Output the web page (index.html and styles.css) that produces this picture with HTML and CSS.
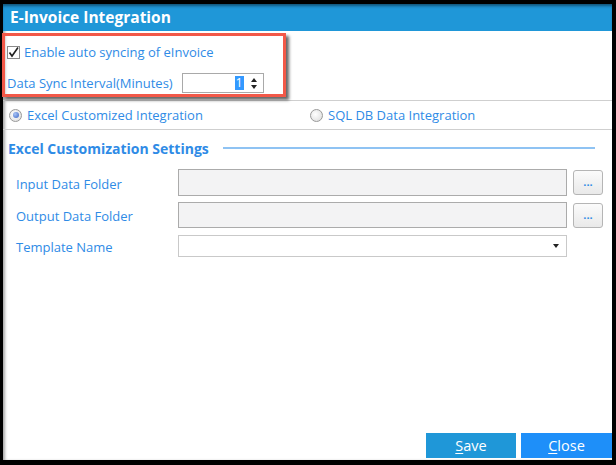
FILE: index.html
```html
<!DOCTYPE html>
<html>
<head>
<meta charset="utf-8">
<link rel="stylesheet" href="styles.css">
</head>
<body>
<div class="window">
  <div class="titlebar">E-Invoice Integration</div>
  <div class="sync">
    <div class="row check-row">
      <svg class="checkbox" width="13" height="13" viewBox="0 0 13 13"><rect x="0.5" y="0.5" width="12" height="12" fill="#fff" stroke="#8a8a8a"/><path d="M2.5 6.5 L5 10 L11 1.5" fill="none" stroke="#222" stroke-width="1.6"/></svg>
      <span class="lbl">Enable auto syncing of eInvoice</span>
    </div>
    <div class="row interval-row">
      <span class="lbl">Data Sync Interval(Minutes)</span>
      <div class="spinner">
        <span class="val">1</span>
        <span class="arrows"><span class="up"></span><span class="down"></span></span>
      </div>
    </div>
  </div>
  <div class="radios">
    <div class="radio-item first">
      <span class="radio on"></span><span class="lbl">Excel Customized Integration</span>
    </div>
    <div class="radio-item">
      <span class="radio"></span><span class="lbl">SQL DB Data Integration</span>
    </div>
  </div>
  <div class="section-head">
    <span class="head-text">Excel Customization Settings</span>
    <span class="head-line"></span>
  </div>
  <div class="form">
    <div class="frow r1">
      <span class="lbl">Input Data Folder</span>
      <div class="box"></div>
      <div class="browse">...</div>
    </div>
    <div class="frow r2">
      <span class="lbl">Output Data Folder</span>
      <div class="box"></div>
      <div class="browse">...</div>
    </div>
    <div class="frow r3">
      <span class="lbl">Template Name</span>
      <div class="select"><span class="caret"></span></div>
    </div>
  </div>
  <div class="footer">
    <div class="btn save"><u>S</u>ave</div>
    <div class="btn close"><u>C</u>lose</div>
  </div>
  <div class="highlight"></div>
</div>
</body>
</html>
```
FILE: styles.css
```css
html, body {
  margin: 0;
  padding: 0;
}
body {
  width: 616px;
  height: 465px;
  background: #000;
  overflow: hidden;
  font-family: "Open Sans", "Noto Sans", sans-serif;
}
.window {
  position: relative;
  margin: 4px 4px 0 3px;
  width: 609px;
  height: 456px;
  background: #fff;
  display: flex;
  flex-direction: column;
  box-shadow: inset 3px 0 3px -1px rgba(0,0,0,0.35);
}
.titlebar {
  height: 27px;
  background: #1f97d8;
  color: #fff;
  font-weight: bold;
  font-size: 15.5px;
  line-height: 27px;
  padding-left: 7px;
  box-shadow: inset 0 3px 3px -1px rgba(0,0,0,0.45);
}
.lbl {
  color: #2f8be6;
  font-size: 13px;
  white-space: nowrap;
}
.sync {
  height: 69px;
  border-bottom: 1px solid #cfcfcf;
}
.row {
  display: flex;
  align-items: center;
  height: 22px;
}
.check-row {
  margin-top: 10px;
  padding-left: 4px;
  gap: 4px;
}
.checkbox {
  display: block;
}
.interval-row {
  margin-top: 9px;
  padding-left: 4px;
}
.spinner {
  margin-left: 9px;
  width: 80px;
  height: 18px;
  border: 1px solid #a9a9a9;
  display: flex;
  align-items: center;
  justify-content: flex-end;
  font-size: 12.5px;
}
.val {
  background: #3399ff;
  color: #fff;
  line-height: 14px;
  padding: 0 1px;
  margin-right: 4px;
}
.arrows {
  width: 12px;
  display: flex;
  flex-direction: column;
  align-items: center;
  gap: 3px;
  margin-right: 3px;
}
.up {
  width: 0; height: 0;
  border-left: 3px solid transparent;
  border-right: 3px solid transparent;
  border-bottom: 4px solid #222;
}
.down {
  width: 0; height: 0;
  border-left: 3px solid transparent;
  border-right: 3px solid transparent;
  border-top: 4px solid #222;
}
.radios {
  height: 28px;
  border-bottom: 1px solid #cfcfcf;
  display: flex;
  align-items: center;
}
.radio-item {
  display: flex;
  align-items: center;
  gap: 5px;
}
.radio-item.first {
  padding-left: 6px;
  width: 301px;
}
.radio {
  width: 11px;
  height: 11px;
  border-radius: 50%;
  border: 1px solid #9a9a9a;
  background: radial-gradient(circle at 40% 40%, #ffffff, #d9d9d9);
  box-sizing: content-box;
  position: relative;
}
.radio.on::after {
  content: "";
  position: absolute;
  left: 2.5px; top: 2.5px;
  width: 6px; height: 6px;
  border-radius: 50%;
  background: radial-gradient(circle at 35% 35%, #a9c4f5, #3a64c4);
}
.section-head {
  height: 36px;
  display: flex;
  align-items: center;
  padding-left: 5px;
}
.head-text {
  color: #2f8be6;
  font-weight: bold;
  font-size: 14px;
  white-space: nowrap;
}
.head-line {
  margin-left: 14px;
  width: 372px;
  height: 2px;
  background: #8fc3f3;
}
.form {
  margin-top: 3px;
  display: flex;
  flex-direction: column;
}
.frow {
  display: grid;
  grid-template-columns: 156px 389px 30px;
  column-gap: 6px;
  align-items: center;
  padding-left: 13px;
}
.frow .lbl {
  padding-top: 2px;
}
.r1 { height: 27px; }
.r2 { height: 26px; margin-top: 6px; }
.r3 { height: 22px; margin-top: 7px; }
.box {
  box-sizing: border-box;
  border: 1px solid #ababab;
  background: #f3f3f4;
}
.r1 .box { height: 27px; }
.r2 .box { height: 26px; }
.browse {
  height: 25px;
  box-sizing: border-box;
  border: 1px solid #b5b5b5;
  border-radius: 3px;
  background: linear-gradient(#fbfbfb, #e9e9e9);
  color: #2f8be6;
  font-size: 11px;
  font-weight: bold;
  text-align: center;
  line-height: 22px;
}
.select {
  height: 22px;
  box-sizing: border-box;
  border: 1px solid #c9c9c9;
  background: #fff;
  position: relative;
}
.caret {
  position: absolute;
  right: 7px;
  top: 8px;
  width: 0; height: 0;
  border-left: 3px solid transparent;
  border-right: 3px solid transparent;
  border-top: 4px solid #222;
}
.footer {
  margin-top: auto;
  margin-bottom: 2px;
  display: flex;
  justify-content: flex-end;
  gap: 5px;
}
.btn {
  height: 25px;
  line-height: 25px;
  color: #fff;
  font-size: 14.5px;
  text-align: center;
}
.save { width: 90px; background: #1f97d8; }
.close { width: 91px; background: #1e8ff9; }
.btn u { text-underline-offset: 2px; }
.highlight {
  position: absolute;
  left: -1px;
  top: 29px;
  width: 278px;
  height: 58px;
  border: 3px solid #f25848;
  box-shadow: 3px 3px 3px rgba(0,0,0,0.6);
  pointer-events: none;
}
```
